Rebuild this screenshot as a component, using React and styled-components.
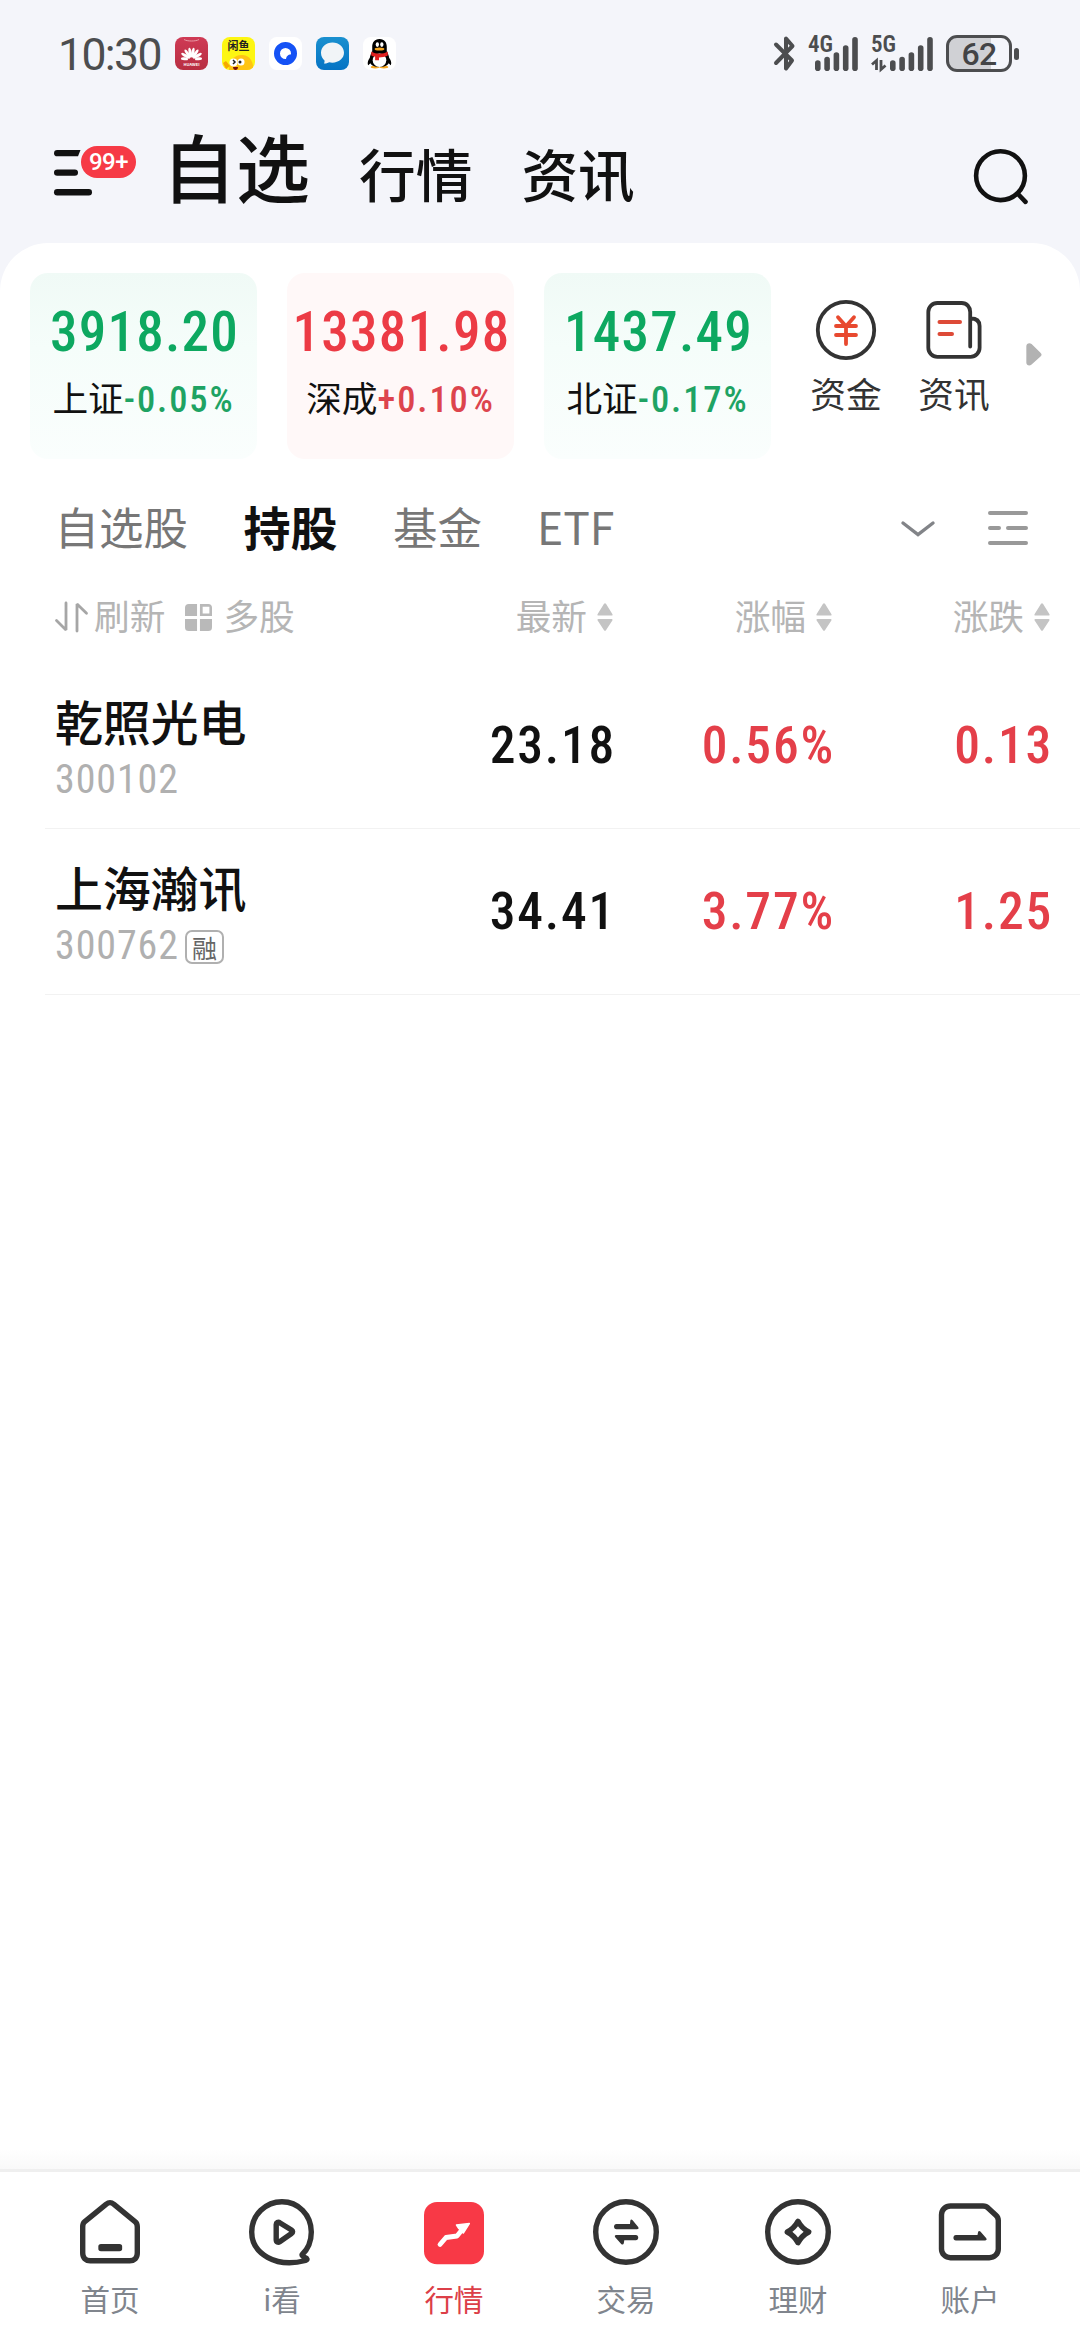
import React from 'react';
import styled, { createGlobalStyle } from 'styled-components';

const CJK = `'Noto Sans CJK SC', 'Noto Sans', sans-serif`;
const DIGITS = `'Roboto Condensed', Roboto, 'Noto Sans CJK SC', sans-serif`;

const tones = {
  up: '#ec3b45',
  down: '#0da860',
  upSoft: '#dd444d',
  downSoft: '#1ea363',
  ink: '#111111',
};

const GlobalStyle = createGlobalStyle`
  * { box-sizing: border-box; }
  html, body { margin: 0; padding: 0; background: #ffffff; }
  body { font-family: ${CJK}; color: ${tones.ink}; }
  svg { display: block; flex: none; overflow: visible; }
`;

const Screen = styled.div`
  width: 1080px;
  height: 2340px;
  display: flex;
  flex-direction: column;
  background: #f4f5fa;
  overflow: hidden;
`;

/* ---------- status bar ---------- */

const StatusBar = styled.header`
  height: 107px;
  padding: 0 61px 0 58px;
  display: flex;
  align-items: center;
  justify-content: space-between;
`;

const StatusGroup = styled.div`
  display: flex;
  align-items: center;
  gap: ${(p) => p.$gap || 0}px;
`;

const Clock = styled.span`
  width: 104px;
  margin-right: 13px;
  font: 400 44.5px/60px Roboto, sans-serif;
  letter-spacing: -1.6px;
  color: #4c4d4f;
  white-space: nowrap;
  padding-top: 2px;
`;

const AppBadge = styled.span`
  width: 33px;
  height: 33px;
  border-radius: 8px;
  background: ${(p) => p.$bg};
  overflow: hidden;
  display: flex;
  flex-direction: column;
  align-items: center;
`;

const TinyText = styled.span`
  font: 700 ${(p) => p.$size}px/${(p) => p.$line}px ${CJK};
  color: ${(p) => p.$color};
  white-space: nowrap;
`;

const SignalBox = styled.div`
  position: relative;
`;

const NetLabel = styled.span`
  position: absolute;
  left: 0;
  top: -4px;
  font: 600 23px/24px ${DIGITS};
  letter-spacing: -0.1px;
  color: #4c4d4f;
`;

const Battery = styled.div`
  width: 66px;
  height: 37px;
  border: 3px solid #4c4d4f;
  border-radius: 11px;
  background: linear-gradient(90deg, #d0d1d5 0 42px, transparent 42px);
  font: 500 32px/32px Roboto, sans-serif;
  letter-spacing: -0.6px;
  color: #434446;
  text-align: center;
`;

const BatteryTip = styled.span`
  width: 5px;
  height: 12px;
  margin-left: 2px;
  border-radius: 3px;
  background: #4c4d4f;
`;

/* ---------- title navigation ---------- */

const TitleBar = styled.nav`
  height: 136px;
  padding: 0 51px 0 54px;
  display: flex;
  align-items: flex-start;
`;

const MenuButton = styled.div`
  position: relative;
  width: 108px;
  padding-top: 42.7px;
`;

const CountBadge = styled.span`
  position: absolute;
  left: 27px;
  top: 38.7px;
  width: 55px;
  height: 32px;
  border-radius: 16px;
  background: #f63a46;
  color: #ffffff;
  font: 500 24px/33px Roboto, sans-serif;
  letter-spacing: -0.5px;
  text-align: center;
`;

const Titles = styled.div`
  flex: 1;
  display: flex;
  align-items: baseline;
  gap: 49px;
`;

const Title = styled.span`
  font-size: ${(p) => (p.$active ? 74 : 56.7)}px;
  line-height: 115px;
  font-weight: 500;
`;

const SearchButton = styled.div`
  padding-top: 42px;
`;

/* ---------- white panel ---------- */

const Panel = styled.main`
  flex: 1;
  display: flex;
  flex-direction: column;
  border-radius: 48px 48px 0 0;
  background: #ffffff;
`;

const MarketStrip = styled.section`
  display: flex;
  padding: 30px 0 0 30px;
  height: 222px;
`;

const IndexCard = styled.div`
  width: 227px;
  height: 186px;
  margin-right: 30px;
  padding-top: 23.5px;
  border-radius: 18px;
  display: flex;
  flex-direction: column;
  align-items: center;
  background: ${(p) =>
    p.$tone === 'up' ? '#fff8f8' : 'linear-gradient(180deg, #f0faf6 0%, #f5fdfa 40%, #fafefd 100%)'};
`;

const IndexValue = styled.span`
  font: 500 55px/70px ${DIGITS};
  letter-spacing: 1.25px;
  padding-left: 2px;
  color: ${(p) => tones[p.$tone]};
`;

const IndexLabel = styled.span`
  display: flex;
  align-items: baseline;
  font-size: 35.7px;
  line-height: 60px;
`;

const IndexDelta = styled.span`
  font: 500 36.5px/60px ${DIGITS};
  letter-spacing: 1.9px;
  color: ${(p) => tones[`${p.$tone}Soft`]};
`;

const Shortcut = styled.div`
  width: 108px;
  padding-top: 27px;
  display: flex;
  flex-direction: column;
  align-items: center;
  margin-left: ${(p) => (p.$first ? -9 : 0)}px;
  font-size: 35.7px;
  line-height: 52px;
  color: #333333;
  gap: 7px;
`;

const MoreArrow = styled.div`
  padding: 70px 0 0 18px;
`;

/* ---------- group tabs ---------- */

const GroupTabs = styled.div`
  height: 126px;
  padding: 0 52px 0 54.5px;
  display: flex;
  align-items: center;
  color: #777777;
`;

const GroupTab = styled.span`
  width: ${(p) => p.$w}px;
  font-size: ${(p) => (p.$active ? 47 : 44.5)}px;
  font-weight: ${(p) => (p.$active ? 700 : 400)};
  line-height: 70px;
  padding-bottom: 5px;
  white-space: nowrap;
  color: ${(p) => (p.$active ? tones.ink : '#777777')};
`;

const TabTools = styled.div`
  margin-left: auto;
  display: flex;
  align-items: center;
  gap: 53px;
`;

/* ---------- holdings table ---------- */

const TableHead = styled.div`
  height: 70px;
  margin: -9px 0 10.5px;
  padding: 0 30px 0 55px;
  display: grid;
  grid-template-columns: 339px 219px 219px 1fr;
  align-items: center;
  font-size: 35.7px;
  line-height: 50px;
  color: #b5b5b5;
`;

const HeadTools = styled.div`
  display: flex;
  align-items: center;
`;

const HeadTool = styled.span`
  display: flex;
  align-items: center;
  gap: ${(p) => p.$gap}px;
  margin-right: 20px;
`;

const HeadText = styled.span`
  padding-bottom: 5px;
`;

const SortHead = styled.div`
  display: flex;
  align-items: center;
  justify-content: flex-end;
  gap: 10px;
`;

const StockRow = styled.div`
  height: 166px;
  margin-left: 45px;
  padding: 0 30px 0 10px;
  display: grid;
  grid-template-columns: 339px 219px 219px 1fr;
  border-bottom: 1.5px solid #f2f2f2;
`;

const StockInfo = styled.div`
  padding-top: 21px;
`;

const StockName = styled.div`
  font-size: 48px;
  line-height: 72px;
  font-weight: 500;
  letter-spacing: -0.2px;
  white-space: nowrap;
`;

const StockCode = styled.div`
  display: flex;
  align-items: center;
  gap: 6px;
  height: 48px;
  font: 400 40px/48px ${DIGITS};
  letter-spacing: 0.9px;
  color: #b0b0b0;
`;

const MarginTag = styled.span`
  width: 39px;
  height: 34px;
  margin-top: 2px;
  border: 2px solid #b0b0b0;
  border-radius: 7px;
  display: flex;
  align-items: center;
  justify-content: center;
  font: 400 25px/28px ${CJK};
  letter-spacing: 0;
  color: #666666;
`;

const Figure = styled.span`
  padding-top: 46px;
  margin-right: -3px;
  font: 500 51.5px/74px ${DIGITS};
  letter-spacing: 1.8px;
  text-align: right;
  color: ${(p) => (p.$plain ? tones.ink : '#e43f49')};
`;

/* ---------- bottom bar ---------- */

const Fade = styled.div`
  height: 20px;
  margin-top: auto;
  background: linear-gradient(180deg, #ffffff, #f9f9f9);
`;

const BottomBar = styled.footer`
  height: 171px;
  padding: 0 24px;
  display: flex;
  border-top: 3px solid #efefef;
  background: #ffffff;
`;

const BottomItem = styled.div`
  width: 172px;
  padding-top: 26px;
  display: flex;
  flex-direction: column;
  align-items: center;
  gap: 10px;
  font-size: 29.5px;
  line-height: 44px;
  color: ${(p) => (p.$active ? '#dc3f48' : '#80858d')};
`;

/* ---------- drawings ---------- */

const HuaweiIcon = () => (
  <svg width="33" height="25" viewBox="0 0 33 25">
    <path d="M9 2.500c3 2 12 2 15 0" fill="none" stroke="#e79aa5" strokeWidth="1" />
    <g fill="#fff">
      {[-84, -58, -34, -11, 11, 34, 58, 84].map((a) => (
        <ellipse key={a} cx="16.5" cy="15.500" rx="1.500" ry={Math.abs(a) > 70 ? 3.6 : 5} transform={`rotate(${a} 16.5 22.500)`} />
      ))}
    </g>
  </svg>
);

const FishFace = () => (
  <svg width="33" height="18" viewBox="0 0 33 18">
    <path d="M7 18C6 6 13 0 21 1c8 1 11 8 10 17z" fill="#ffc414" />
    <path d="M1 9l3-2 4 5-4 3z" fill="#f5a800" />
    <circle cx="11.500" cy="8.500" r="4" fill="#fff" />
    <circle cx="19" cy="8" r="3.500" fill="#fff" />
    <path d="M11 6l2 2-2 2" fill="none" stroke="#222" strokeWidth="1.500" />
    <circle cx="18" cy="8" r="1.500" fill="#222" />
    <path d="M11 13h5c0 4-5 4-5 0z" fill="#7a1208" />
  </svg>
);

const QuarkIcon = () => (
  <svg width="33" height="33" viewBox="0 0 33 33">
    <circle cx="16.500" cy="16.500" r="8.500" fill="none" stroke="#1552f5" strokeWidth="6" />
    <path d="M22 17.500v5h-5c0-3 2-5 5-5z" fill="#1552f5" />
  </svg>
);

const MessageIcon = () => (
  <svg width="33" height="33" viewBox="0 0 33 33">
    <path d="M16.500 5.500C10 5.500 5 10 5 16c0 3 1.500 6 3.500 7.500.3 1.500-.5 2.500-.5 3 2 .3 4-.5 5-1.200 8 1.700 15-3 15-9.500C28 10 23 5.500 16.500 5.500z" fill="#f1f4f7" />
  </svg>
);

const PenguinIcon = () => (
  <svg width="33" height="33" viewBox="0 0 33 34">
    <path d="M7 21c-3 3-3 7-2 8l3-3zM26 21c3 3 3 7 2 8l-3-3z" fill="#000" />
    <ellipse cx="12" cy="31" rx="4.500" ry="1.500" fill="#f5a623" />
    <ellipse cx="21" cy="31" rx="4.500" ry="1.500" fill="#f5a623" />
    <path d="M16.500 2C11 2 9 6 9 10v5c-3 5-3 9-2 12 2 5 17 5 19 0 1-3 1-7-2-12v-5c0-4-2-8-7.500-8z" fill="#000" />
    <ellipse cx="16.500" cy="24" rx="7" ry="7" fill="#fff" />
    <ellipse cx="14.300" cy="7.800" rx="1.700" ry="2.400" fill="#fff" />
    <ellipse cx="18.900" cy="7.800" rx="1.700" ry="2.400" fill="#fff" />
    <ellipse cx="16.500" cy="12.300" rx="5" ry="1.600" fill="#f5a623" />
    <path d="M8 15c5 3 12 3 17 0v4c-3 1.500-6 2-9 2v3h-4v-4c-2 0-3-.5-4-1z" fill="#e02020" />
  </svg>
);

const BluetoothIcon = () => (
  <svg width="21" height="35" viewBox="0 0 21 35">
    <path d="M2 8.500l16 16-6 8V21.500M2 27L18.500 10 12 2.500v10.500" fill="none" stroke="#4c4d4f" strokeWidth="4" strokeLinecap="round" strokeLinejoin="round" />
  </svg>
);

const Signal = ({ label, width, arrows }) => {
  const tops = [23.3, 19.7, 15.3, 8.3, 0];
  return (
    <SignalBox>
      <svg width={width} height="34" viewBox={`0 0 ${width} 34`}>
        <g stroke="#4c4d4f" strokeWidth="5.600" strokeLinecap="round">
          {tops.map((t, i) => {
            const x = width - 3 - (4 - i) * 9.3;
            return <line key={t} x1={x} x2={x} y1={t + 2.8} y2="31.200" />;
          })}
        </g>
        {arrows && (
          <path d="M5.500 33V23.500L1 27.500M10 23v9.500l4.500-4" fill="none" stroke="#4c4d4f" strokeWidth="2.800" />
        )}
      </svg>
      <NetLabel>{label}</NetLabel>
    </SignalBox>
  );
};

const MenuIcon = () => (
  <svg width="40" height="46" viewBox="0 0 40 46">
    <g fill="#111">
      <path d="M3.200 0H26.500l-2.500 6.300H3.200a3.150 3.150 0 0 1 0-6.300z" />
      <rect x="0" y="19.400" width="24" height="6.400" rx="3.200" />
      <rect x="0" y="39" width="38" height="6.400" rx="3.200" />
    </g>
  </svg>
);

const SearchIcon = () => (
  <svg width="55" height="56" viewBox="0 0 55 56">
    <circle cx="26.500" cy="26.700" r="24.400" fill="none" stroke="#111" strokeWidth="4.600" />
    <path d="M44 45l7.500 7.800" stroke="#111" strokeWidth="4.600" strokeLinecap="round" />
  </svg>
);

const YuanIcon = () => (
  <svg width="60" height="60" viewBox="0 0 60 60">
    <circle cx="30" cy="30" r="28.200" fill="none" stroke="#333" strokeWidth="3.800" />
    <path d="M22 17.200l8 9 8-9M20 26h20M20 35h20M30 26v18" fill="none" stroke="#e8492f" strokeWidth="3.800" strokeLinecap="round" strokeLinejoin="round" />
  </svg>
);

const NewsIcon = () => (
  <svg width="60" height="60" viewBox="0 0 60 60">
    <path d="M46.200 46.500V12c0-5-3.500-9-8.500-9H13.300c-5 0-9 4-9 9v35.800c0 5 4 9 9 9h33.300c5 0 9-4 9-9V26c0-5-3-7.500-9-7.500" fill="none" stroke="#333" strokeWidth="3.800" strokeLinecap="round" />
    <path d="M15.500 22h20.500M15.500 34h12.500" stroke="#dd4a37" strokeWidth="4" strokeLinecap="round" />
  </svg>
);

const ArrowRight = () => (
  <svg width="16" height="23" viewBox="0 0 16 24">
    <path d="M0 3.500C0 .5 3-.8 5.500 1l9 8.800c2 1.800 1.800 3 0 4.600l-9 8C3 24.500 0 23 0 20.500z" fill="#b2b2b2" />
  </svg>
);

const ChevronDown = () => (
  <svg width="34" height="16" viewBox="0 0 34 16">
    <path d="M2 3l15 11.500L32 3" fill="none" stroke="#828488" strokeWidth="3.400" strokeLinecap="round" />
  </svg>
);

const ListIcon = () => (
  <svg width="40" height="34" viewBox="0 0 40 34">
    <path d="M2 2h36M2 17h9M20 17h18M2 32h36" stroke="#999" strokeWidth="4" strokeLinecap="round" />
  </svg>
);

const RefreshIcon = () => (
  <svg width="32" height="30" viewBox="0 0 32 30">
    <path d="M11 1v27L1.500 18.500M22 29V2l9.500 9.300" fill="none" stroke="#a6a6a6" strokeWidth="2.800" strokeLinecap="round" strokeLinejoin="bevel" />
  </svg>
);

const GridIcon = () => (
  <svg width="27" height="27" viewBox="0 0 28 28">
    <g fill="#b9b9b9">
      <path d="M4 0h8.500v12.500H0V4a4 4 0 0 1 4-4zM0 15.500h12.500V28H4a4 4 0 0 1-4-4zM15.500 15.500H28V24a4 4 0 0 1-4 4h-8.500z" />
      <path fillRule="evenodd" d="M15.500 0H24a4 4 0 0 1 4 4v8.500H15.500zM18.300 2.800v7h7v-7z" />
    </g>
  </svg>
);

const SortIcon = () => (
  <svg width="16" height="28" viewBox="0 0 16 29">
    <path d="M7 .8c.6-.8 1.400-.8 2 0l6.600 10.500c.5.900.2 1.700-.8 1.700H1.200c-1 0-1.300-.8-.8-1.700zM7 28.200c.6.800 1.400.8 2 0l6.600-10c.5-.9.2-1.700-.8-1.700H1.200c-1 0-1.300.8-.8 1.700z" fill="#c4c4c4" />
  </svg>
);

const Outline = styled.g`
  fill: none;
  stroke: #333333;
  stroke-width: 5.4;
  stroke-linejoin: round;
  stroke-linecap: round;
`;

const HomeIcon = () => (
  <svg width="68" height="68" viewBox="0 0 68 68">
    <Outline>
      <path d="M30 6.300L8.500 23.800C7 25 6.700 26.500 6.700 29v26c0 5 3 7.800 7.500 7.800h39.600c4.500 0 7.500-2.800 7.500-7.800V29c0-2.500-.5-4-2-5.200L38 6.300c-3-2.300-5-2.300-8 0z" />
      <path d="M25 49.700h18.500M25 48.800h18.500M25 50.600h18.500" />
    </Outline>
  </svg>
);

const WatchIcon = () => (
  <svg width="68" height="68" viewBox="0 0 68 68">
    <Outline>
      <path d="M54 56.800c5.500-5.300 9.300-13.500 9.300-22.800C63.300 16.500 50 3.700 34 3.700S3.700 16.500 3.700 34c0 21.500 24.300 36.500 53.800 28.500 2.500-.8 1.500-2.200-.5-3-1.800-.8-3-1.700-3-2.700z" />
      <path d="M28.200 26.500c0-2 2-3 3.500-1.800L43.500 32c1.500 1 1.500 2.500 0 3.500l-11.800 8.300c-1.500 1-3.500.5-3.500-2z" />
    </Outline>
  </svg>
);

const TrendIcon = () => (
  <svg width="68" height="68" viewBox="0 0 68 68">
    <rect x="4" y="4" width="60" height="62.300" rx="13" fill="#f83946" />
    <path d="M20 46.500l6-7L37 38l6.500-8" fill="none" stroke="#fff" strokeWidth="4.800" strokeLinecap="round" strokeLinejoin="round" />
    <path d="M36.500 27l12.800-1.500-6 9.500-4.500-4.500z" fill="#fff" stroke="#fff" strokeWidth="1.500" strokeLinejoin="round" />
  </svg>
);

const TradeIcon = () => (
  <svg width="68" height="68" viewBox="0 0 68 68">
    <Outline><circle cx="34" cy="34" r="30.300" /></Outline>
    <g fill="#333">
      <path d="M24.500 26H38l.3-3.300c.3-1.300 1.200-1.600 2.300-.5l5.600 6.700c.8 1.300.2 2.300-1.200 2.300H24.500c-3.300 0-3.300-5.200 0-5.200z" />
      <path d="M43.800 42.300H32.300l-.5 3c-.4 1.500-1.500 1.700-2.600.6l-6-6.700c-.8-1.200-.4-2.200 1-2.200h19.600c3.300 0 3.300 5.300 0 5.300z" />
    </g>
  </svg>
);

const WealthIcon = () => (
  <svg width="68" height="68" viewBox="0 0 68 68">
    <Outline>
      <circle cx="34" cy="34" r="30.300" />
      <path d="M34 23.300c2.500 4.700 6 8.200 10.700 10.700-4.700 2.500-8.200 6-10.700 10.700-2.500-4.700-6-8.200-10.700-10.700 4.700-2.500 8.200-6 10.700-10.700z" />
    </Outline>
  </svg>
);

const AccountIcon = () => (
  <svg width="68" height="68" viewBox="0 0 68 68">
    <Outline>
      <path d="M14.500 8h32.500c2.500 0 4 .8 5.300 2.200l7.600 7c1.700 1.500 2.400 3 2.400 5.200v28.500c0 5-4 8.800-9 8.800H14.500c-5 0-9-3.800-9-8.800V16.800C5.500 11.800 9.500 8 14.500 8z" />
    </Outline>
    <path d="M20 37h21.500l.6-2.900c.4-1.300 1.300-1.500 2.300-.5l5.700 6.500c1 1.200.6 2.400-1.200 2.400H20c-3.400 0-3.400-5.500 0-5.500z" fill="#333" />
  </svg>
);

/* ---------- data ---------- */

const indices = [
  { name: '上证', value: '3918.20', delta: '-0.05%', tone: 'down' },
  { name: '深成', value: '13381.98', delta: '+0.10%', tone: 'up' },
  { name: '北证', value: '1437.49', delta: '-0.17%', tone: 'down' },
];

const stocks = [
  { name: '乾照光电', code: '300102', last: '23.18', rate: '0.56%', change: '0.13' },
  { name: '上海瀚讯', code: '300762', tag: '融', last: '34.41', rate: '3.77%', change: '1.25' },
];

const bottomItems = [
  { label: '首页', icon: <HomeIcon /> },
  { label: 'i看', icon: <WatchIcon /> },
  { label: '行情', icon: <TrendIcon />, active: true },
  { label: '交易', icon: <TradeIcon /> },
  { label: '理财', icon: <WealthIcon /> },
  { label: '账户', icon: <AccountIcon /> },
];

export default function App() {
  return (
    <Screen>
      <GlobalStyle />

      <StatusBar>
        <StatusGroup>
          <Clock>10:30</Clock>
          <StatusGroup $gap={14}>
            <AppBadge $bg="linear-gradient(#cf3a55, #b82f42)">
              <HuaweiIcon />
              <TinyText $size={4} $line={5} $color="#fff">HUAWEI</TinyText>
            </AppBadge>
            <AppBadge $bg="#fdf612">
              <TinyText $size={11} $line={17} $color="#222">闲鱼</TinyText>
              <FishFace />
            </AppBadge>
            <AppBadge $bg="#ffffff"><QuarkIcon /></AppBadge>
            <AppBadge $bg="linear-gradient(#1a90cf, #0573c4)"><MessageIcon /></AppBadge>
            <AppBadge $bg="#ffffff"><PenguinIcon /></AppBadge>
          </StatusGroup>
        </StatusGroup>
        <StatusGroup $gap={13}>
          <BluetoothIcon />
          <Signal label="4G" width={50} />
          <Signal label="5G" width={62} arrows />
          <StatusGroup>
            <Battery>62</Battery>
            <BatteryTip />
          </StatusGroup>
        </StatusGroup>
      </StatusBar>

      <TitleBar>
        <MenuButton>
          <MenuIcon />
          <CountBadge>99+</CountBadge>
        </MenuButton>
        <Titles>
          <Title $active>自选</Title>
          <Title>行情</Title>
          <Title>资讯</Title>
        </Titles>
        <SearchButton><SearchIcon /></SearchButton>
      </TitleBar>

      <Panel>
        <MarketStrip>
          {indices.map((item) => (
            <IndexCard key={item.name} $tone={item.tone}>
              <IndexValue $tone={item.tone}>{item.value}</IndexValue>
              <IndexLabel>
                {item.name}
                <IndexDelta $tone={item.tone}>{item.delta}</IndexDelta>
              </IndexLabel>
            </IndexCard>
          ))}
          <Shortcut $first><YuanIcon />资金</Shortcut>
          <Shortcut><NewsIcon />资讯</Shortcut>
          <MoreArrow><ArrowRight /></MoreArrow>
        </MarketStrip>

        <GroupTabs>
          <GroupTab $w={189}>自选股</GroupTab>
          <GroupTab $w={149.5} $active>持股</GroupTab>
          <GroupTab $w={144}>基金</GroupTab>
          <GroupTab $w={90}>ETF</GroupTab>
          <TabTools>
            <ChevronDown />
            <ListIcon />
          </TabTools>
        </GroupTabs>

        <TableHead>
          <HeadTools>
            <HeadTool $gap={7}><RefreshIcon /><HeadText>刷新</HeadText></HeadTool>
            <HeadTool $gap={11}><GridIcon /><HeadText>多股</HeadText></HeadTool>
          </HeadTools>
          {['最新', '涨幅', '涨跌'].map((label) => (
            <SortHead key={label}><HeadText>{label}</HeadText><SortIcon /></SortHead>
          ))}
        </TableHead>

        {stocks.map((s) => (
          <StockRow key={s.code}>
            <StockInfo>
              <StockName>{s.name}</StockName>
              <StockCode>
                {s.code}
                {s.tag && <MarginTag>{s.tag}</MarginTag>}
              </StockCode>
            </StockInfo>
            <Figure $plain>{s.last}</Figure>
            <Figure>{s.rate}</Figure>
            <Figure>{s.change}</Figure>
          </StockRow>
        ))}

        <Fade />
        <BottomBar>
          {bottomItems.map((item) => (
            <BottomItem key={item.label} $active={item.active}>
              {item.icon}
              {item.label}
            </BottomItem>
          ))}
        </BottomBar>
      </Panel>
    </Screen>
  );
}
